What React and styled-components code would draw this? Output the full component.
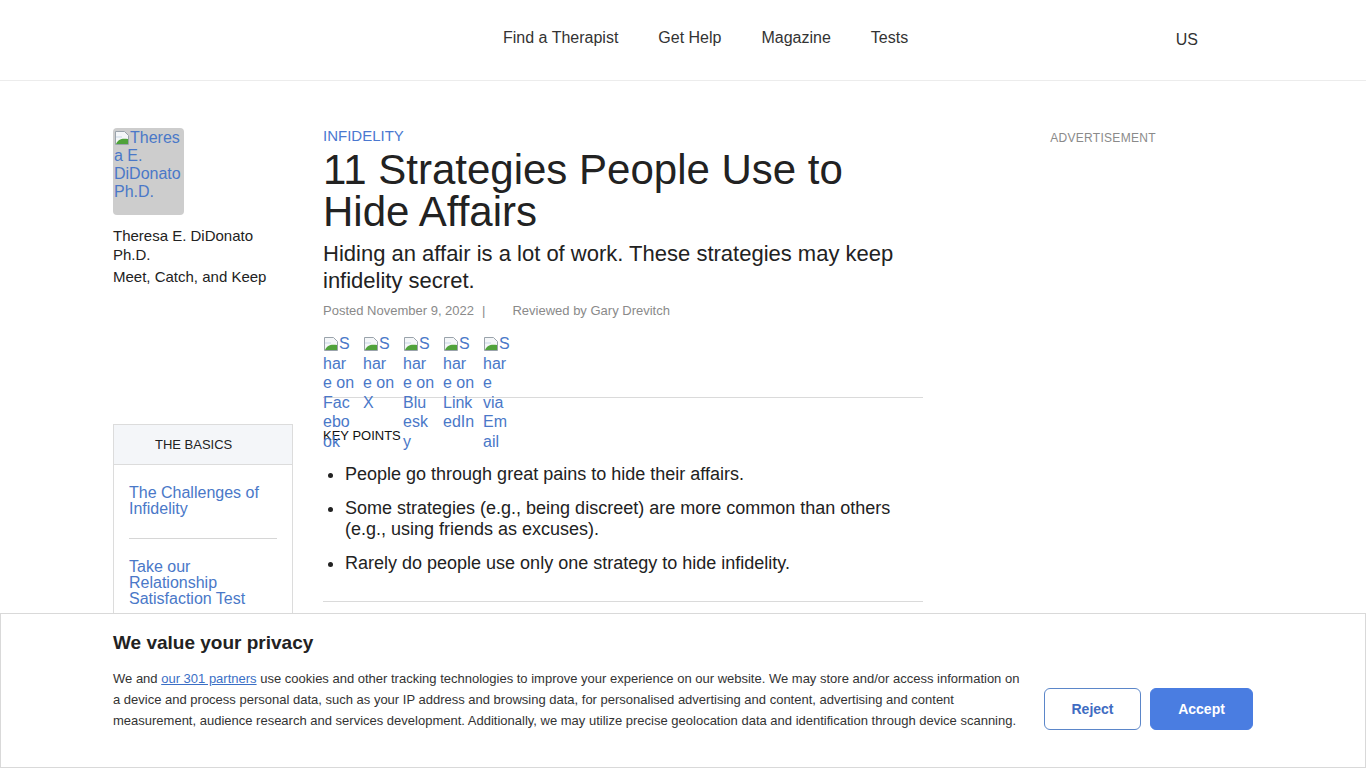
import styled, { createGlobalStyle } from 'styled-components';

const GlobalStyle = createGlobalStyle`
  * { box-sizing: border-box; }
  body {
    margin: 0;
    font-family: 'Liberation Sans', Arial, sans-serif;
    color: #222;
    background: #fff;
  }
  a { text-decoration: none; }
`;

const Header = styled.header`
  height: 81px;
  border-bottom: 1px solid #ececec;
`;

const HeaderInner = styled.div`
  width: 1140px;
  margin: 0 auto;
  height: 80px;
  display: flex;
  align-items: center;
`;

const Nav = styled.nav`
  display: flex;
  gap: 40px;
  margin-left: 390px;
  margin-top: -4px;
`;

const NavLink = styled.a`
  font-size: 16px;
  color: #333;
`;

const Region = styled.span`
  margin-left: auto;
  margin-right: 55px;
  font-size: 16px;
  color: #333;
`;

const Page = styled.div`
  width: 1140px;
  margin: 0 auto;
  padding-top: 47px;
  display: grid;
  grid-template-columns: 180px 600px 300px;
  column-gap: 30px;
  align-items: start;
`;

const Sidebar = styled.aside`
  display: flex;
  flex-direction: column;
`;

/* broken image: alt text with the missing-image glyph in front */
const AltText = styled.span`
  display: block;
  position: relative;
  text-indent: 16px;
  overflow-wrap: anywhere;
  color: #4a78c8;
  font-size: 16px;
  line-height: ${p => p.$lh || '18px'};
`;

const AltIcon = styled.span`
  position: absolute;
  left: 0;
  top: ${p => p.$top || '1px'};
  width: 16px;
  height: 16px;
  text-indent: 0;
  line-height: 0;
`;

const AuthorPhoto = styled.div`
  width: 71px;
  height: 87px;
  border-radius: 4px;
  background: #cdcdcd;
  padding: 1px;
  overflow: hidden;
`;

const AuthorName = styled.div`
  margin-top: 12px;
  font-size: 15px;
  line-height: 18.5px;
  color: #222;
`;

const AuthorBook = styled.div`
  margin-top: 4px;
  font-size: 15px;
  line-height: 18.5px;
  color: #222;
`;

const Basics = styled.div`
  margin-top: 137px;
  border: 1px solid #dcdcdc;
  border-bottom: none;
`;

const BasicsHead = styled.div`
  height: 40px;
  background: #f4f6f9;
  border-bottom: 1px solid #dcdcdc;
  display: flex;
  align-items: center;
  padding-left: 41px;
  padding-top: 1px;
  font-size: 13px;
  color: #222;
`;

const BasicsList = styled.div`
  padding: 20px 15px 40px;
`;

const BasicsLink = styled.a`
  display: block;
  font-size: 16px;
  line-height: 16px;
  color: #4a78c8;
  padding-bottom: ${p => (p.$divided ? '21px' : '0')};
  margin-bottom: ${p => (p.$divided ? '20px' : '0')};
  border-bottom: ${p => (p.$divided ? '1px solid #d6d6d6' : 'none')};
`;

const Article = styled.main`
  display: flex;
  flex-direction: column;
`;

const Kicker = styled.a`
  font-size: 15px;
  line-height: 16px;
  color: #4a78d0;
  text-transform: uppercase;
`;

const Title = styled.h1`
  margin: 5px 0 0;
  font-size: 42px;
  line-height: 42px;
  font-weight: 400;
  color: #222;
`;

const Subtitle = styled.h2`
  margin: 7px 0 0;
  font-size: 22px;
  line-height: 27px;
  font-weight: 400;
  color: #222;
`;

const Byline = styled.div`
  margin-top: 8px;
  font-size: 13px;
  line-height: 18px;
  color: #8a8a8a;
  display: flex;
  gap: 8px;
`;

const Pipe = styled.span`
  margin-right: 19px;
`;

const ShareRow = styled.div`
  margin-top: 14px;
  height: 64px;
  display: flex;
  gap: 8px;
  align-items: flex-start;
  border-bottom: 1px solid #dadada;
`;

const ShareItem = styled.a`
  width: 32px;
  flex: none;
  position: relative;
  z-index: 1;
`;

const KeyPoints = styled.section`
  padding: 29px 0 27px;
  border-bottom: 1px solid #dadada;
`;

const KeyLabel = styled.div`
  font-size: 13px;
  line-height: 18px;
  color: #111;
`;

const Points = styled.ul`
  margin: 19px 0 0;
  padding-left: 22px;
`;

const Point = styled.li`
  font-size: 18px;
  line-height: 21px;
  color: #222;
  margin-bottom: 13px;
  &:last-child { margin-bottom: 0; }
`;

const AdColumn = styled.aside`
  display: flex;
  justify-content: center;
  padding-top: 3px;
`;

const AdLabel = styled.span`
  font-size: 12px;
  color: #8a8a8a;
  letter-spacing: 0.3px;
`;

const Consent = styled.div`
  position: fixed;
  left: 0;
  right: 0;
  bottom: 0;
  height: 155px;
  background: #fff;
  border: 1px solid #d9d9d9;
  z-index: 10;
`;

const ConsentInner = styled.div`
  width: 1140px;
  margin: 0 auto;
  padding-top: 17px;
  display: flex;
  gap: 19px;
`;

const ConsentText = styled.div`
  width: 912px;
`;

const ConsentTitle = styled.h3`
  margin: 0;
  font-size: 19px;
  line-height: 24px;
  font-weight: 700;
  color: #222;
`;

const ConsentBody = styled.p`
  margin: 13px 0 0;
  font-size: 13px;
  line-height: 21px;
  color: #333;
`;

const PartnerLink = styled.a`
  color: #3b6fc6;
  text-decoration: underline;
`;

const Buttons = styled.div`
  display: flex;
  gap: 9px;
  margin-top: 57px;
  align-self: flex-start;
`;

const ConsentButton = styled.button`
  height: 42px;
  width: ${p => (p.$primary ? '103px' : '97px')};
  border-radius: 6px;
  border: 1px solid ${p => (p.$primary ? '#4a7de1' : '#5b86c9')};
  background: ${p => (p.$primary ? '#4a7de1' : '#fff')};
  color: ${p => (p.$primary ? '#fff' : '#3f6cc2')};
  font-family: inherit;
  font-size: 14px;
  font-weight: 700;
  cursor: pointer;
`;

const BrokenIcon = () => (
  <svg width="16" height="16" viewBox="0 0 16 16">
    <path d="M1.5 1.5h9l4 4v9h-13z" fill="#f4f6f8" stroke="#9aa3ab" />
    <path d="M2 14c2-5 6-6 12-5v5z" fill="#4fa23a" />
    <path d="M2 7h6" stroke="#c9d7e6" />
  </svg>
);

const BrokenImage = ({ alt, lh, top }) => (
  <AltText $lh={lh}>
    <AltIcon $top={top}>
      <BrokenIcon />
    </AltIcon>
    {alt}
  </AltText>
);

const shares = ['Share on Facebook', 'Share on X', 'Share on Bluesky', 'Share on LinkedIn', 'Share via Email'];

const points = [
  'People go through great pains to hide their affairs.',
  'Some strategies (e.g., being discreet) are more common than others (e.g., using friends as excuses).',
  'Rarely do people use only one strategy to hide infidelity.',
];

export default function App() {
  return (
    <>
      <GlobalStyle />
      <Header>
        <HeaderInner>
          <Nav>
            <NavLink>Find a Therapist</NavLink>
            <NavLink>Get Help</NavLink>
            <NavLink>Magazine</NavLink>
            <NavLink>Tests</NavLink>
          </Nav>
          <Region>US</Region>
        </HeaderInner>
      </Header>

      <Page>
        <Sidebar>
          <AuthorPhoto>
            <BrokenImage alt="Theresa E. DiDonato Ph.D." />
          </AuthorPhoto>
          <AuthorName>Theresa E. DiDonato Ph.D.</AuthorName>
          <AuthorBook>Meet, Catch, and Keep</AuthorBook>
          <Basics>
            <BasicsHead>THE BASICS</BasicsHead>
            <BasicsList>
              <BasicsLink $divided>The Challenges of Infidelity</BasicsLink>
              <BasicsLink>Take our Relationship Satisfaction Test</BasicsLink>
            </BasicsList>
          </Basics>
        </Sidebar>

        <Article>
          <Kicker>Infidelity</Kicker>
          <Title>11 Strategies People Use to Hide Affairs</Title>
          <Subtitle>Hiding an affair is a lot of work. These strategies may keep infidelity secret.</Subtitle>
          <Byline>
            <span>Posted November 9, 2022</span>
            <Pipe>|</Pipe>
            <span>Reviewed by Gary Drevitch</span>
          </Byline>
          <ShareRow>
            {shares.map(s => (
              <ShareItem key={s}>
                <BrokenImage alt={s} lh="19.5px" top="2px" />
              </ShareItem>
            ))}
          </ShareRow>
          <KeyPoints>
            <KeyLabel>KEY POINTS</KeyLabel>
            <Points>
              {points.map(p => (
                <Point key={p}>{p}</Point>
              ))}
            </Points>
          </KeyPoints>
        </Article>

        <AdColumn>
          <AdLabel>ADVERTISEMENT</AdLabel>
        </AdColumn>
      </Page>

      <Consent>
        <ConsentInner>
          <ConsentText>
            <ConsentTitle>We value your privacy</ConsentTitle>
            <ConsentBody>
              We and <PartnerLink>our 301 partners</PartnerLink> use cookies and other tracking technologies to improve your experience on our website. We may store and/or access information on a device and process personal data, such as your IP address and browsing data, for personalised advertising and content, advertising and content measurement, audience research and services development. Additionally, we may utilize precise geolocation data and identification through device scanning.
            </ConsentBody>
          </ConsentText>
          <Buttons>
            <ConsentButton>Reject</ConsentButton>
            <ConsentButton $primary>Accept</ConsentButton>
          </Buttons>
        </ConsentInner>
      </Consent>
    </>
  );
}
